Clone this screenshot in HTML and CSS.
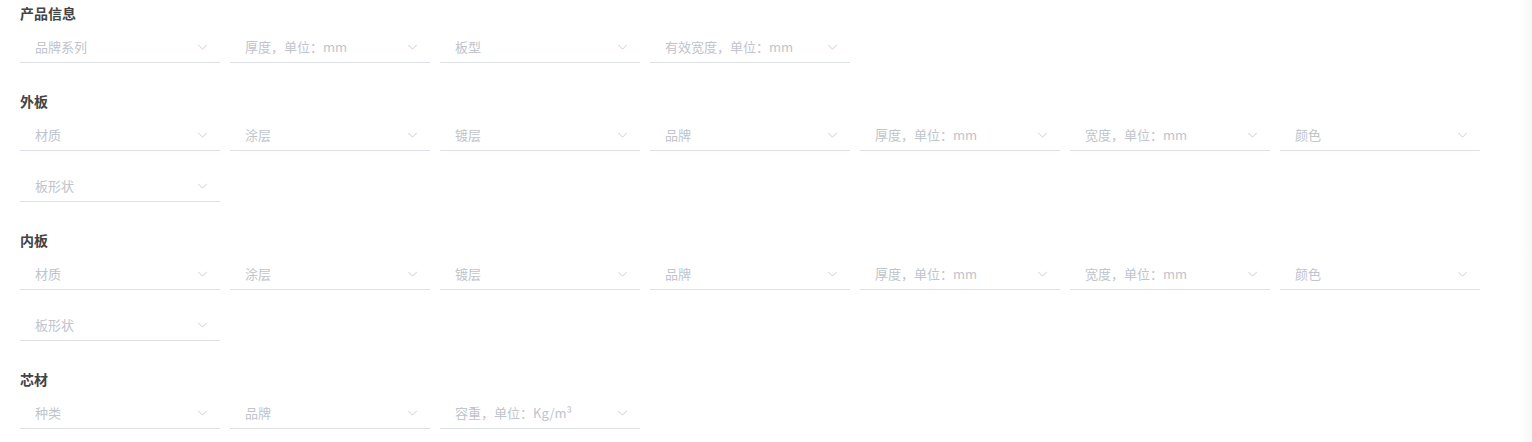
FILE: index.html
```html
<!DOCTYPE html>
<html lang="zh-CN">
<head>
<meta charset="utf-8">
<title>表单</title>
<link rel="stylesheet" href="styles.css">
</head>
<body>
<div class="page">
  <section class="section">
    <div class="section-title">产品信息</div>
    <div class="fields">
      <div class="field"><span class="ph">品牌系列</span><svg class="arrow" viewBox="0 0 12 7"><path d="M1 1l5 5 5-5"/></svg></div>
      <div class="field"><span class="ph">厚度，单位：mm</span><svg class="arrow" viewBox="0 0 12 7"><path d="M1 1l5 5 5-5"/></svg></div>
      <div class="field"><span class="ph">板型</span><svg class="arrow" viewBox="0 0 12 7"><path d="M1 1l5 5 5-5"/></svg></div>
      <div class="field"><span class="ph">有效宽度，单位：mm</span><svg class="arrow" viewBox="0 0 12 7"><path d="M1 1l5 5 5-5"/></svg></div>
    </div>
  </section>
  <section class="section">
    <div class="section-title">外板</div>
    <div class="fields">
      <div class="field"><span class="ph">材质</span><svg class="arrow" viewBox="0 0 12 7"><path d="M1 1l5 5 5-5"/></svg></div>
      <div class="field"><span class="ph">涂层</span><svg class="arrow" viewBox="0 0 12 7"><path d="M1 1l5 5 5-5"/></svg></div>
      <div class="field"><span class="ph">镀层</span><svg class="arrow" viewBox="0 0 12 7"><path d="M1 1l5 5 5-5"/></svg></div>
      <div class="field"><span class="ph">品牌</span><svg class="arrow" viewBox="0 0 12 7"><path d="M1 1l5 5 5-5"/></svg></div>
      <div class="field"><span class="ph">厚度，单位：mm</span><svg class="arrow" viewBox="0 0 12 7"><path d="M1 1l5 5 5-5"/></svg></div>
      <div class="field"><span class="ph">宽度，单位：mm</span><svg class="arrow" viewBox="0 0 12 7"><path d="M1 1l5 5 5-5"/></svg></div>
      <div class="field"><span class="ph">颜色</span><svg class="arrow" viewBox="0 0 12 7"><path d="M1 1l5 5 5-5"/></svg></div>
      <div class="field"><span class="ph">板形状</span><svg class="arrow" viewBox="0 0 12 7"><path d="M1 1l5 5 5-5"/></svg></div>
    </div>
  </section>
  <section class="section">
    <div class="section-title">内板</div>
    <div class="fields">
      <div class="field"><span class="ph">材质</span><svg class="arrow" viewBox="0 0 12 7"><path d="M1 1l5 5 5-5"/></svg></div>
      <div class="field"><span class="ph">涂层</span><svg class="arrow" viewBox="0 0 12 7"><path d="M1 1l5 5 5-5"/></svg></div>
      <div class="field"><span class="ph">镀层</span><svg class="arrow" viewBox="0 0 12 7"><path d="M1 1l5 5 5-5"/></svg></div>
      <div class="field"><span class="ph">品牌</span><svg class="arrow" viewBox="0 0 12 7"><path d="M1 1l5 5 5-5"/></svg></div>
      <div class="field"><span class="ph">厚度，单位：mm</span><svg class="arrow" viewBox="0 0 12 7"><path d="M1 1l5 5 5-5"/></svg></div>
      <div class="field"><span class="ph">宽度，单位：mm</span><svg class="arrow" viewBox="0 0 12 7"><path d="M1 1l5 5 5-5"/></svg></div>
      <div class="field"><span class="ph">颜色</span><svg class="arrow" viewBox="0 0 12 7"><path d="M1 1l5 5 5-5"/></svg></div>
      <div class="field"><span class="ph">板形状</span><svg class="arrow" viewBox="0 0 12 7"><path d="M1 1l5 5 5-5"/></svg></div>
    </div>
  </section>
  <section class="section">
    <div class="section-title">芯材</div>
    <div class="fields">
      <div class="field"><span class="ph">种类</span><svg class="arrow" viewBox="0 0 12 7"><path d="M1 1l5 5 5-5"/></svg></div>
      <div class="field"><span class="ph">品牌</span><svg class="arrow" viewBox="0 0 12 7"><path d="M1 1l5 5 5-5"/></svg></div>
      <div class="field"><span class="ph">容重，单位：Kg/m³</span><svg class="arrow" viewBox="0 0 12 7"><path d="M1 1l5 5 5-5"/></svg></div>
    </div>
  </section>
</div>
</body>
</html>
```

FILE: styles.css
```css
html, body {
  margin: 0;
  padding: 0;
}
body {
  font-family: "Noto Sans CJK SC", "Noto Sans", sans-serif;
  background: linear-gradient(to right, #ffffff calc(100% - 12px), #f8f8f8 100%);
  min-height: 442px;
  overflow: hidden;
}
.page {
  padding: 0 20px;
}
.section {
  padding-bottom: 25px;
}
.section-title {
  height: 26px;
  line-height: 26px;
  font-size: 14px;
  font-weight: 700;
  color: #444;
}
.fields {
  margin-top: 4px;
  display: flex;
  flex-wrap: wrap;
  column-gap: 10px;
  row-gap: 18px;
  max-width: 1492px;
}
.field {
  box-sizing: border-box;
  width: 200px;
  height: 33px;
  border-bottom: 1px solid #dcdfe6;
  padding: 0 12px 0 15px;
  display: flex;
  align-items: center;
  justify-content: space-between;
}
.ph {
  font-size: 13px;
  color: #c0c4cc;
  line-height: 32px;
  padding-top: 2px;
  white-space: nowrap;
}
.arrow {
  width: 11px;
  height: 6px;
  margin-top: 1px;
  fill: none;
  stroke: #c8cbd2;
  stroke-width: 1.1;
}
```
